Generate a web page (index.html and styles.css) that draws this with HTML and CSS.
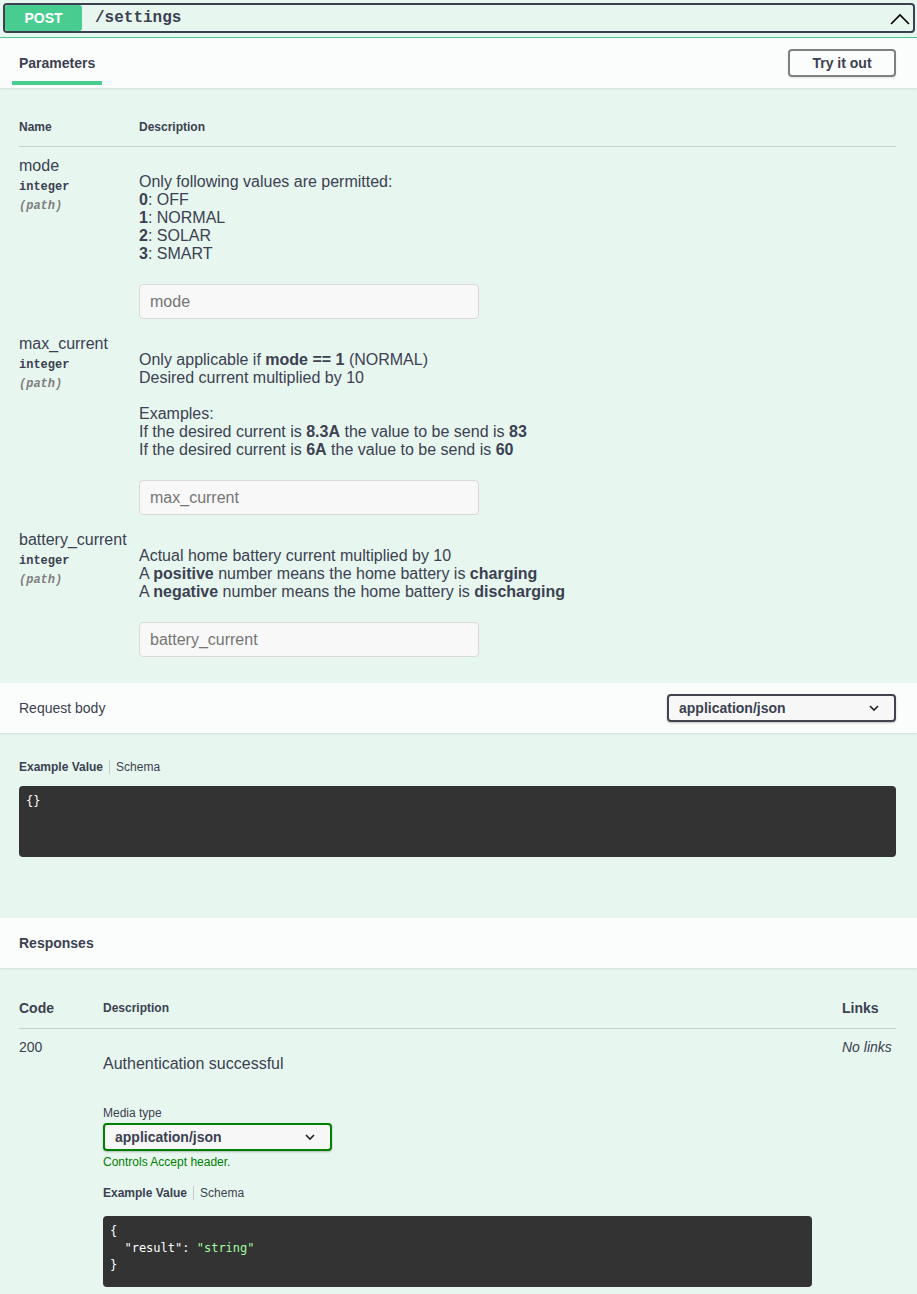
FILE: index.html
```html
<!DOCTYPE html>
<html>
<head>
<meta charset="utf-8">
<link rel="stylesheet" href="styles.css">
</head>
<body>
<div class="opblock">
  <div class="summary">
    <span class="method">POST</span>
    <span class="path">/settings</span>
    <svg class="arrow" width="20" height="12" viewBox="0 0 20 12"><path d="M1 11 L10 2 L19 11" fill="none" stroke="#000" stroke-width="1.6"/></svg>
  </div>
  <div class="green-line"></div>

  <div class="section-header">
    <div class="tab">Parameters</div>
    <button class="try">Try it out</button>
  </div>

  <div class="params">
    <div class="ptable">
      <div class="phead">
        <div class="col-name">Name</div>
        <div class="col-desc">Description</div>
      </div>

      <div class="prow">
        <div class="col-name">
          <div class="pname">mode</div>
          <div class="ptype">integer</div>
          <div class="pin">(path)</div>
        </div>
        <div class="col-desc">
          <p class="md">Only following values are permitted:<br><b>0</b>: OFF<br><b>1</b>: NORMAL<br><b>2</b>: SOLAR<br><b>3</b>: SMART</p>
          <div class="input">mode</div>
        </div>
      </div>

      <div class="prow">
        <div class="col-name">
          <div class="pname">max_current</div>
          <div class="ptype">integer</div>
          <div class="pin">(path)</div>
        </div>
        <div class="col-desc">
          <p class="md">Only applicable if <b>mode == 1</b> (NORMAL)<br>Desired current multiplied by 10<br><br>Examples:<br>If the desired current is <b>8.3A</b> the value to be send is <b>83</b><br>If the desired current is <b>6A</b> the value to be send is <b>60</b></p>
          <div class="input">max_current</div>
        </div>
      </div>

      <div class="prow">
        <div class="col-name">
          <div class="pname">battery_current</div>
          <div class="ptype">integer</div>
          <div class="pin">(path)</div>
        </div>
        <div class="col-desc">
          <p class="md">Actual home battery current multiplied by 10<br>A <b>positive</b> number means the home battery is <b>charging</b><br>A <b>negative</b> number means the home battery is <b>discharging</b></p>
          <div class="input">battery_current</div>
        </div>
      </div>
    </div>
  </div>

  <div class="section-header rb-header">
    <div class="rb-title">Request body</div>
    <div class="select dark">
      <span>application/json</span>
      <svg width="12" height="8" viewBox="0 0 12 8"><path d="M2 2 L6 6 L10 2" fill="none" stroke="#222" stroke-width="1.6"/></svg>
    </div>
  </div>

  <div class="rb-body">
    <div class="tabs-ex"><span class="ex-active">Example Value</span><span class="sep"></span><span class="ex-schema">Schema</span></div>
    <pre class="code">{}</pre>
  </div>

  <div class="section-header resp-header">
    <div class="resp-title">Responses</div>
  </div>

  <div class="responses">
    <div class="rhead">
      <div class="rcode">Code</div>
      <div class="rdesc small">Description</div>
      <div class="rlinks">Links</div>
    </div>
    <div class="rrow">
      <div class="rcode normal">200</div>
      <div class="rdesc">
        <p class="md">Authentication successful</p>
        <div class="media-label">Media type</div>
        <div class="select green">
          <span>application/json</span>
          <svg width="12" height="8" viewBox="0 0 12 8"><path d="M2 2 L6 6 L10 2" fill="none" stroke="#222" stroke-width="1.6"/></svg>
        </div>
        <div class="accept">Controls Accept header.</div>
        <div class="tabs-ex"><span class="ex-active">Example Value</span><span class="sep"></span><span class="ex-schema">Schema</span></div>
        <pre class="code">{
  "result": <span class="str">"string"</span>
}</pre>
      </div>
      <div class="rlinks nolinks">No links</div>
    </div>
  </div>
</div>
</body>
</html>
```

FILE: styles.css
```css
* { box-sizing: border-box; }
html, body { margin: 0; padding: 0; background: #e8f6f0; }
body {
  font-family: "Liberation Sans", Arial, Helvetica, sans-serif;
  color: #3b4151;
  width: 917px;
  height: 1294px;
  overflow: hidden;
}
.opblock { background: #e8f6f0; padding-top: 3px; }

.summary {
  display: flex;
  align-items: center;
  margin: 0 2px 0 3px;
  height: 30px;
  border: 2px solid #3b4151;
  border-radius: 4px;
}
.method {
  width: 77px;
  height: 26px;
  background: #49cc90;
  color: #fff;
  font-weight: bold;
  font-size: 14px;
  text-align: center;
  line-height: 26px;
  border-radius: 3px;
}
.path {
  margin-left: 13px;
  font-family: "Liberation Mono", "Courier New", monospace;
  font-weight: bold;
  font-size: 16px;
  color: #3b4151;
  flex: 1;
}
.arrow { margin-right: 3px; margin-top: 2px; }
.green-line { margin-top: 4px; height: 1px; background: #49cc90; }

.section-header {
  display: flex;
  align-items: center;
  justify-content: space-between;
  background: rgba(255,255,255,.8);
  box-shadow: 0 1px 2px rgba(0,0,0,.1);
  height: 50px;
  padding: 0 21px 0 12px;
  position: relative;
}
.tab {
  align-self: stretch;
  display: flex;
  align-items: center;
  padding: 6px 7px 0;
  font-weight: bold;
  font-size: 14px;
  border-bottom: 4px solid #49cc90;
  margin-bottom: 3px;
}
.try {
  width: 108px;
  height: 28px;
  border: 2px solid #808080;
  border-radius: 4px;
  background: transparent;
  font-family: inherit;
  font-weight: bold;
  font-size: 14px;
  color: #3b4151;
  box-shadow: 0 1px 2px rgba(0,0,0,.1);
}

.params { padding: 20px 21px 20px 19px; }
.phead {
  display: flex;
  font-size: 12px;
  font-weight: bold;
  padding: 12px 0 12px;
  line-height: 14px;
  border-bottom: 1px solid rgba(59,65,81,.2);
}
.col-name { width: 120px; flex-shrink: 0; }
.col-desc { flex: 1; }
.prow { display: flex; padding-top: 10px; }
.pname { font-size: 16px; line-height: 18px; }
.ptype {
  font-family: "Liberation Mono", "Courier New", monospace;
  font-weight: bold;
  font-size: 12px;
  line-height: 14px;
  padding: 5px 0;
}
.pin {
  font-family: "Liberation Mono", "Courier New", monospace;
  font-style: italic;
  font-weight: bold;
  font-size: 12px;
  line-height: 14px;
  color: #808080;
}
.md { margin: 16px 0; font-size: 16px; line-height: 18px; }
.md b { font-weight: bold; }
.input {
  width: 340px;
  height: 35px;
  margin: 21px 0 6px;
  background: #f8f8f8;
  border: 1px solid #d9d9d9;
  border-radius: 4px;
  padding: 0 10px;
  font-size: 16px;
  line-height: 33px;
  color: #757575;
}

.rb-header { padding: 0 21px 0 19px; }
.rb-title { font-size: 14px; }
.select {
  display: flex;
  align-items: center;
  justify-content: space-between;
  width: 229px;
  height: 28px;
  border-radius: 4px;
  padding: 0 14px 0 10px;
  font-weight: bold;
  font-size: 14px;
  background: #f7f7f7;
  box-shadow: 0 1px 2px rgba(0,0,0,.25);
}
.select.dark { border: 2px solid #41444e; }
.select.green { border: 2px solid #008000; }

.rb-body { padding: 27px 21px 61px 19px; }
.tabs-ex { display: flex; align-items: center; font-size: 12px; line-height: 14px; }
.ex-active { font-weight: bold; }
.sep { width: 1px; height: 14px; background: #c8c8c8; margin: 0 6px; }
.code {
  margin: 0;
  margin-top: 12px;
  background: #333;
  color: #fff;
  border-radius: 4px;
  padding: 7px;
  font-family: "DejaVu Sans Mono", Menlo, monospace;
  font-weight: normal;
  font-size: 12px;
  line-height: 17px;
  height: 71px;
}
.str { color: #a2fca2; }

.resp-header { padding: 0 19px; }
.resp-title { font-weight: bold; font-size: 14px; }

.responses { padding: 30px 21px 20px 19px; }
.rhead {
  display: flex;
  align-items: center;
  font-weight: bold;
  font-size: 14px;
  line-height: 16px;
  padding: 2px 0 12px;
  border-bottom: 1px solid rgba(59,65,81,.2);
}
.rcode { width: 84px; flex-shrink: 0; }
.rcode.normal { font-weight: normal; font-size: 14px; line-height: 16px; }
.rdesc { flex: 1; padding-right: 30px; }
.rdesc.small { font-size: 12px; }
.rlinks { width: 54px; flex-shrink: 0; }
.rrow { display: flex; padding-top: 10px; }
.nolinks { font-style: italic; font-size: 14px; line-height: 16px; }
.media-label { font-size: 12px; line-height: 14px; margin-top: 33px; margin-bottom: 3px; }
.accept { color: #008000; font-size: 12px; line-height: 14px; margin-top: 4px; margin-bottom: 17px; }
.rrow .code { margin-top: 16px; }
```
